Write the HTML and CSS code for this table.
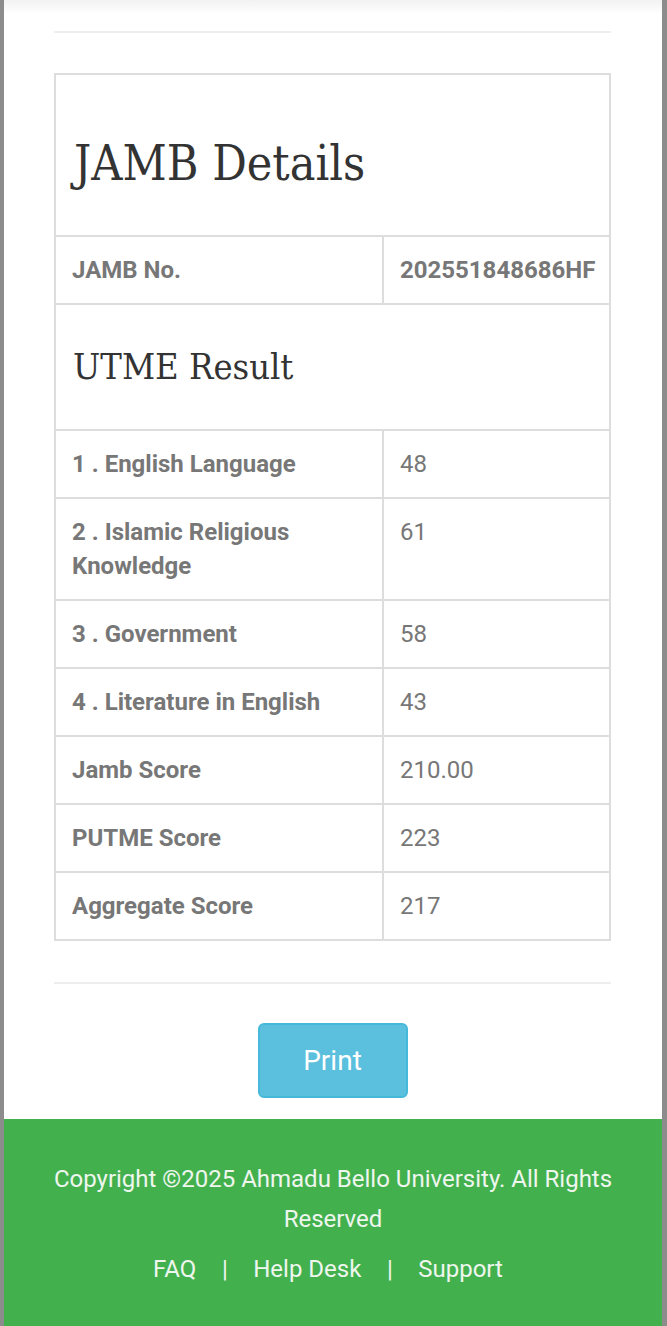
FILE: index.html
```html
<!DOCTYPE html>
<html>
<head>
<meta charset="utf-8">
<link rel="stylesheet" href="styles.css">
</head>
<body>
<div class="page">
  <div class="content">
    <hr class="rule">
    <table class="details">
      <colgroup><col class="col-label"><col class="col-value"></colgroup>
      <tr><td colspan="2" class="head-cell"><h1>JAMB Details</h1></td></tr>
      <tr><td class="label">JAMB No.</td><td class="value strong">202551848686HF</td></tr>
      <tr><td colspan="2" class="sub-cell"><h2>UTME Result</h2></td></tr>
      <tr><td class="label">1 . English Language</td><td class="value">48</td></tr>
      <tr><td class="label">2 . Islamic Religious Knowledge</td><td class="value">61</td></tr>
      <tr><td class="label">3 . Government</td><td class="value">58</td></tr>
      <tr><td class="label">4 . Literature in English</td><td class="value">43</td></tr>
      <tr><td class="label">Jamb Score</td><td class="value">210.00</td></tr>
      <tr><td class="label">PUTME Score</td><td class="value">223</td></tr>
      <tr><td class="label">Aggregate Score</td><td class="value">217</td></tr>
    </table>
    <hr class="rule rule-bottom">
    <div class="actions"><button class="btn-print">Print</button></div>
  </div>
  <footer class="footer">
    <p class="copy">Copyright ©2025 Ahmadu Bello University. All Rights Reserved</p>
    <nav class="links"><a>FAQ</a><span class="sep">|</span><a>Help Desk</a><span class="sep">|</span><a>Support</a></nav>
  </footer>
</div>
</body>
</html>
```

FILE: styles.css
```css
html, body {
  margin: 0;
  padding: 0;
}
body {
  background: #8c8c8c;
  font-family: Roboto, "Liberation Sans", sans-serif;
  color: #777;
}
.page {
  margin: 0 5px 0 4px;
  background: #fff;
  min-height: 1326px;
  display: flex;
  flex-direction: column;
}
.content {
  padding: 31px 51px 21px 50px;
  background: linear-gradient(#f2f2f2 0px, #fff 14px);
}
.rule {
  border: 0;
  height: 2px;
  background: #eee;
  margin: 0 0 40px 0;
}
.rule-bottom {
  margin: 41px 0 39px 0;
}
.details {
  width: 100%;
  table-layout: fixed;
  border-collapse: collapse;
  border: 2px solid #ddd;
}
.col-label {
  width: 328px;
}
.details td {
  border: 2px solid #ddd;
  padding: 16px;
  font-size: 24px;
  line-height: 34px;
  vertical-align: top;
}
.details td.label {
  font-weight: bold;
}
.details td.strong {
  font-weight: bold;
}
.details td.head-cell {
  padding: 56px 16px 40px 18px;
}
.details td.sub-cell {
  padding: 36px 16px 36px 17px;
}
h1 {
  font-family: "DejaVu Serif", serif;
  font-stretch: condensed;
  font-weight: normal;
  font-size: 48px;
  line-height: 64px;
  color: #333;
  margin: 0;
}
h2 {
  font-family: "DejaVu Serif", serif;
  font-stretch: condensed;
  font-weight: normal;
  font-size: 36px;
  line-height: 52px;
  color: #333;
  margin: 0;
}
.actions {
  display: flex;
  justify-content: center;
}
.btn-print {
  width: 150px;
  height: 75px;
  background: #5bc0de;
  border: 2px solid #46b8da;
  border-radius: 6px;
  color: #fff;
  font-family: Roboto, sans-serif;
  font-size: 28px;
}
.footer {
  flex: 1;
  background: #43b04e;
  color: #eef6ee;
  text-align: center;
  padding: 40px 40px 40px;
  font-size: 24px;
}
.copy {
  margin: 0;
  line-height: 40px;
}
.links {
  margin-top: 10px;
  padding-right: 10px;
  line-height: 40px;
  display: flex;
  justify-content: center;
  gap: 25.5px;
}
```
